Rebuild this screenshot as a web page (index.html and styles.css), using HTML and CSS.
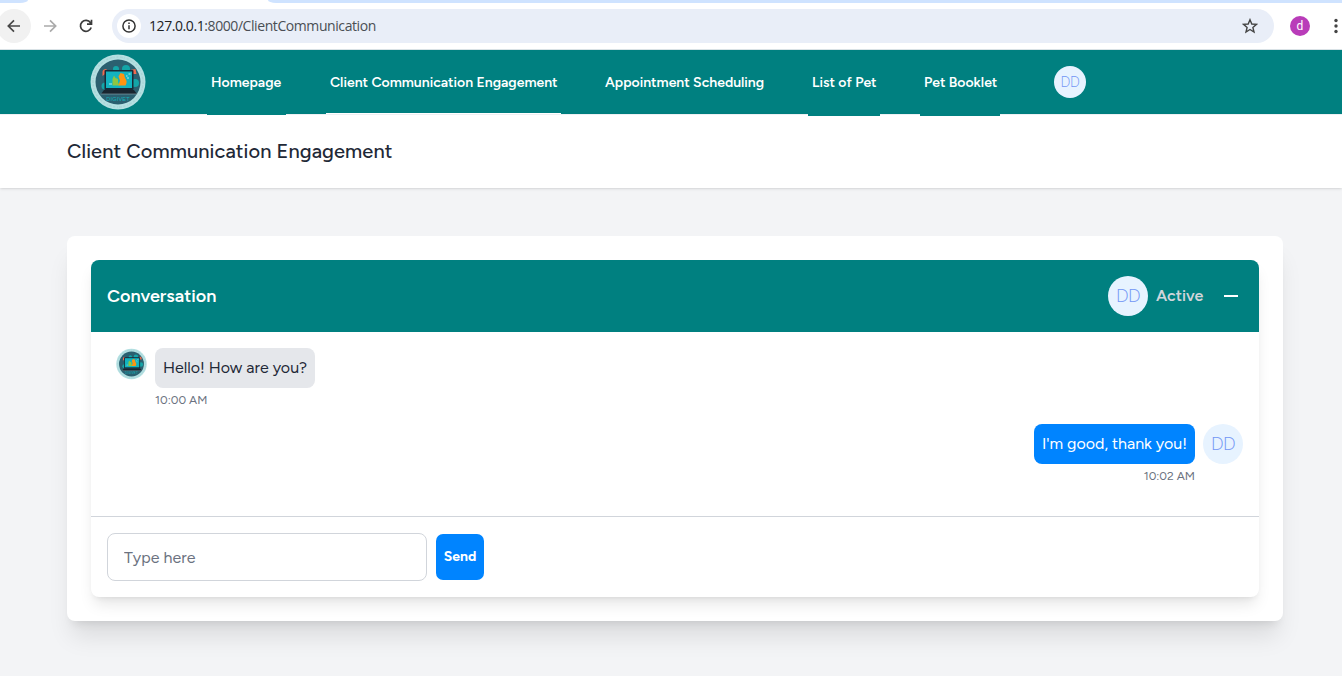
FILE: index.html
```
<!DOCTYPE html>
<html lang="en">
<head>
<meta charset="utf-8">
<title>Client Communication Engagement</title>
<link rel="stylesheet" href="styles.css">
</head>
<body>
<div class="browser">
  <div class="tabs"><span class="tab-left"></span><span class="tab-right"></span></div>
  <div class="toolbar">
    <span class="back"><svg width="16" height="16" viewBox="0 0 16 16"><path d="M14 8H2.500M8 2.300 2.300 8 8 13.700" fill="none" stroke="#474747" stroke-width="1.700"/></svg></span>
    <svg class="forward" width="16" height="16" viewBox="0 0 16 16"><path d="M2 8h11.500M8 2.300 13.700 8 8 13.700" fill="none" stroke="#aaa" stroke-width="1.700"/></svg>
    <svg class="reload" width="16" height="16" viewBox="0 0 16 16"><path d="M13.200 9.600A5.500 5.500 0 1 1 12.500 4.700L13.300 6M13.500 1.800V6.200H9" fill="none" stroke="#3c3c3c" stroke-width="1.700"/></svg>
    <div class="address">
      <span class="info"><svg width="16" height="16" viewBox="0 0 16 16"><circle cx="8" cy="8" r="6.100" fill="none" stroke="#333" stroke-width="1.500"/><path d="M8 7.200v4M8 4.400V6" stroke="#333" stroke-width="1.500"/></svg></span>
      <span class="url"><b>127.0.0.1</b>:8000/ClientCommunication</span>
      <svg width="16" height="16" viewBox="0 0 16 16"><path d="M8 1.700 9.800 6l4.700.4-3.600 3 1.100 4.600L8 11.500 4 14l1.100-4.600-3.600-3L6.200 6z" fill="none" stroke="#444" stroke-width="1.400"/></svg>
    </div>
    <span class="profile">d</span>
    <svg class="dots" width="4" height="16" viewBox="0 0 4 16" fill="#444"><circle cx="2" cy="2.500" r="1.700"/><circle cx="2" cy="8" r="1.700"/><circle cx="2" cy="13.500" r="1.700"/></svg>
  </div>
</div>

<nav class="nav">
  <svg class="brand" width="56" height="56" viewBox="0 0 56 56">
    <g id="logo">
      <circle cx="28" cy="28" r="27.500" fill="#b4e0e2"/>
      <circle cx="28" cy="28" r="25" fill="none" stroke="#94bfc4" stroke-width="1.500" stroke-dasharray="2 1.500 3 1 1 2" opacity=".35"/>
      <circle cx="28" cy="28" r="22.500" fill="#2b6070"/>
      <g fill="#14a5a8"><circle cx="26" cy="15" r="3"/><circle cx="36" cy="15" r="4"/><circle cx="45" cy="29" r="4"/><circle cx="15" cy="32" r="3.500"/></g>
      <path d="M12.500 22v-4q0-3 4-3v4zM46.500 20l-1-5-5 1 3 4z" fill="#f26b4e"/>
      <rect x="14.500" y="16" width="29" height="20" rx="1" fill="#172b38"/>
      <rect x="16" y="17.500" width="26" height="16.500" fill="#12b3c0"/>
      <path d="M22.500 31.500V25l1.500-3.500 1.500 2.500 2.500 1v3l1.500 3.500z" fill="#8fc641"/>
      <path d="M28.500 31.500l1.500-5-1.500-4 2-3.500 3.500 1 1 4q3 3.500.5 7.500z" fill="#ff9411"/>
      <path d="M19 30h3M36 22h1.500M38.500 20h2M37 24h2" stroke="#7fd8dd" stroke-width="1.300"/>
      <path d="M14 36h30l3 4H11z" fill="#182530"/>
      <path d="M10.500 40h37" stroke="#91a9b1" stroke-width=".6"/>
      <text x="28" y="46.500" text-anchor="middle" class="logo-word">DIGIVET</text>
    </g>
  </svg>
  <div class="links">
    <a class="link home">Homepage</a>
    <a class="link client">Client Communication Engagement</a>
    <a class="link schedule">Appointment Scheduling</a>
    <a class="link pets">List of Pet</a>
    <a class="link booklet">Pet Booklet</a>
  </div>
  <span class="avatar small">DD</span>
</nav>

<header class="page-header"><h1>Client Communication Engagement</h1></header>

<main class="card">
  <section class="chat">
    <div class="chat-head">
      <h2>Conversation</h2>
      <span class="avatar">DD</span>
      <span class="status">Active</span>
      <span class="minimize"></span>
    </div>
    <div class="messages">
      <div class="message received">
        <svg class="sender" width="31" height="32" viewBox="0 0 56 56"><use href="#logo"/></svg>
        <div class="body"><p class="bubble">Hello! How are you?</p><time>10:00 AM</time></div>
      </div>
      <div class="message sent">
        <div class="body"><p class="bubble">I'm good, thank you!</p><time>10:02 AM</time></div>
        <span class="avatar">DD</span>
      </div>
    </div>
    <form class="composer">
      <input type="text" placeholder="Type here">
      <button type="button">Send</button>
    </form>
  </section>
</main>
</body>
</html>
```
FILE: styles.css
```
* { box-sizing: border-box; }
body { margin: 0; height: 676px; overflow: hidden; background: #f3f4f6; font-family: Figtree, Lato, sans-serif; font-size: 16px; line-height: 24px; color: #1f2937; }
h1, h2, p { margin: 0; }
svg { display: block; flex: none; }
.logo-word { font-family: "Liberation Sans", sans-serif; font-size: 5.500px; fill: #14b0ba; letter-spacing: .2px; }

.browser { height: 50px; background: #fff; border-bottom: 1px solid #d9e2e6; }
.tabs { height: 3px; display: flex; justify-content: space-between; }
.tab-left { width: 28px; background: #cfe3ff; border-bottom-right-radius: 8px 3px; }
.tab-right { width: 1074px; background: #cfe3ff; border-bottom-left-radius: 8px 3px; }
.toolbar { height: 46px; display: flex; align-items: center; }
.back { width: 34px; height: 34px; margin-left: -3px; border-radius: 50%; background: #f1f1f1; display: flex; align-items: center; justify-content: center; }
.forward { margin-left: 11px; }
.reload { margin-left: 20px; }
.address { width: 1162px; height: 34px; margin-left: 18px; padding: 0 16px 0 5px; border-radius: 17px; background: #e9eef8; display: flex; align-items: center; }
.info { width: 24px; height: 24px; border-radius: 50%; background: #fff; display: flex; align-items: center; justify-content: center; }
.url { flex: 1; margin-left: 8px; font: 14px/20px "Open Sans", "Noto Sans", sans-serif; letter-spacing: -.420px; color: #4a4e54; }
.url b { font-weight: 400; color: #202124; }
.profile { width: 20px; height: 20px; margin-left: 16px; border-radius: 50%; background: #b93cb9; color: #fff; font: 12px/20px Roboto, sans-serif; text-align: center; }
.dots { margin-left: 24px; }

.nav { height: 64px; padding-left: 90px; background: #008080; display: flex; align-items: center; }
.links { height: 64px; margin-left: 61px; display: flex; gap: 40px; align-self: flex-start; }
.link { padding-left: 4px; font-size: 14px; font-weight: 600; line-height: 65px; color: #fff; white-space: nowrap; }
.home { width: 79px; height: 65px; background: #008080; }
.client { width: 235px; height: 64px; border-bottom: 1px solid #fff; }
.schedule { width: 167px; }
.pets { width: 72px; height: 66px; background: #008080; }
.booklet { width: 80px; height: 66px; background: #008080; }
.avatar { width: 40px; height: 40px; flex: none; border-radius: 50%; background: #e7f3ff; color: #7296f5; font: 300 18px/39px "Open Sans", sans-serif; letter-spacing: -.8px; text-align: center; }
.small { width: 32px; height: 32px; margin-left: 54px; font-size: 14px; line-height: 32px; letter-spacing: -.3px; }

.page-header { height: 74px; padding: 22px 67px 23px; background: #fff; border-top: 1px solid #eef0f3; box-shadow: 0 1px 3px rgba(0,0,0,.1), 0 1px 2px -1px rgba(0,0,0,.1); }
h1 { font-size: 20px; font-weight: 500; line-height: 28px; letter-spacing: .1px; white-space: nowrap; }

.card { margin: 48px 59px 0 67px; height: 385px; padding: 24px; border-radius: 8px; background: #fff; box-shadow: 0 20px 25px -5px rgba(0,0,0,.1), 0 8px 10px -6px rgba(0,0,0,.1); }
.chat { height: 337px; border-radius: 8px; background: #fff; box-shadow: 0 10px 15px -3px rgba(0,0,0,.1), 0 4px 6px -4px rgba(0,0,0,.1); }
.chat-head { height: 72px; padding: 0 21px 0 16px; border-radius: 8px 8px 0 0; background: #008080; color: #fff; display: flex; align-items: center; }
h2 { flex: 1; font-size: 18px; font-weight: 600; }
.status { width: 47px; margin: 0 21px 0 8px; color: #d1d5db; font-weight: 600; }
.minimize { width: 14px; height: 2px; background: #fff; }
.messages { height: 184px; padding: 16px 16px 0 25px; display: flex; flex-direction: column; gap: 16px; }
.message { display: flex; gap: 8px; align-items: flex-start; height: 60px; }
.sent { justify-content: flex-end; }
.bubble { height: 40px; padding: 8px; border-radius: 8px; background: #e5e7eb; white-space: nowrap; }
.received .bubble { width: 160px; }
.sent .bubble { width: 161px; background: #0084ff; color: #fff; }
time { display: block; font-size: 12px; line-height: 24px; color: #6b7280; }
.sent time { text-align: right; }
.composer { height: 81px; padding: 16px; border-top: 1px solid #d1d5db; display: flex; gap: 9px; align-items: center; }
.composer input { width: 320px; height: 48px; padding: 1px 16px 0; border: 1px solid #d1d5db; border-radius: 8px; background: #fff; font: 16px Figtree, Lato, sans-serif; letter-spacing: .05px; }
.composer input::placeholder { color: #6b7280; }
.composer button { width: 48px; height: 46px; padding: 0 0 2px; border: 0; border-radius: 7px; background: #0084ff; color: #fff; font: 700 14px Figtree, Lato, sans-serif; }
```
